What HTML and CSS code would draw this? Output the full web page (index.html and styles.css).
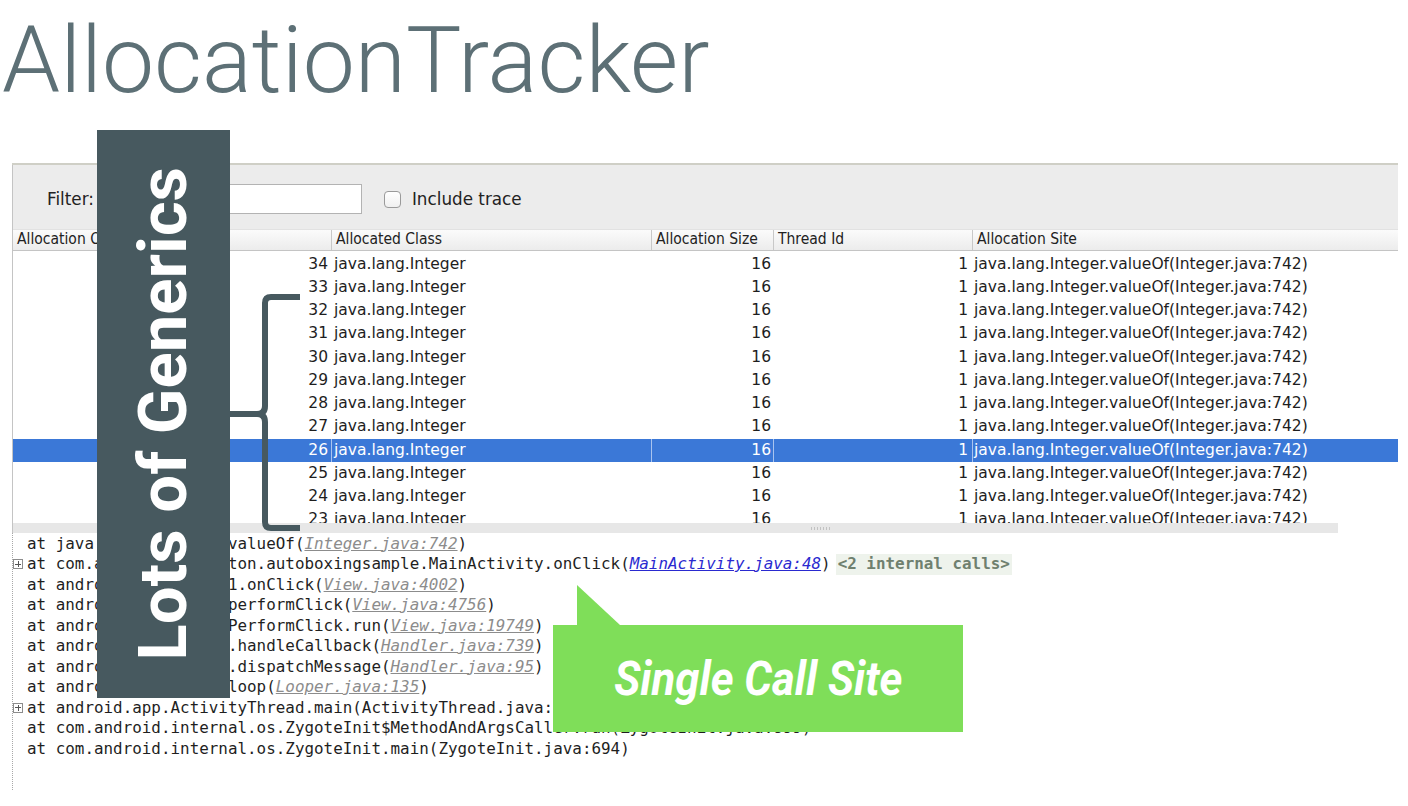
FILE: index.html
```html
<!DOCTYPE html>
<html>
<head>
<meta charset="utf-8">
<link rel="stylesheet" href="styles.css">
</head>
<body>
<div class="page">
  <h1 class="title">AllocationTracker</h1>
  <div class="panel">
    <div class="toolbar">
      <span class="lbl">Filter:</span>
      <span class="input"></span>
      <span class="check"></span>
      <span class="lbl">Include trace</span>
    </div>
    <div class="table">
      <div class="grid thead">
        <div class="th">Allocation Order</div>
        <div class="th sep">Allocated Class</div>
        <div class="th sep">Allocation Size</div>
        <div class="th sep">Thread Id</div>
        <div class="th sep">Allocation Site</div>
      </div>
      <div class="tbody">
        <div class="grid tr"><div class="c1">34</div><div class="c2">java.lang.Integer</div><div class="c3">16</div><div class="c4">1</div><div class="c5">java.lang.Integer.valueOf(Integer.java:742)</div></div>
        <div class="grid tr"><div class="c1">33</div><div class="c2">java.lang.Integer</div><div class="c3">16</div><div class="c4">1</div><div class="c5">java.lang.Integer.valueOf(Integer.java:742)</div></div>
        <div class="grid tr"><div class="c1">32</div><div class="c2">java.lang.Integer</div><div class="c3">16</div><div class="c4">1</div><div class="c5">java.lang.Integer.valueOf(Integer.java:742)</div></div>
        <div class="grid tr"><div class="c1">31</div><div class="c2">java.lang.Integer</div><div class="c3">16</div><div class="c4">1</div><div class="c5">java.lang.Integer.valueOf(Integer.java:742)</div></div>
        <div class="grid tr"><div class="c1">30</div><div class="c2">java.lang.Integer</div><div class="c3">16</div><div class="c4">1</div><div class="c5">java.lang.Integer.valueOf(Integer.java:742)</div></div>
        <div class="grid tr"><div class="c1">29</div><div class="c2">java.lang.Integer</div><div class="c3">16</div><div class="c4">1</div><div class="c5">java.lang.Integer.valueOf(Integer.java:742)</div></div>
        <div class="grid tr"><div class="c1">28</div><div class="c2">java.lang.Integer</div><div class="c3">16</div><div class="c4">1</div><div class="c5">java.lang.Integer.valueOf(Integer.java:742)</div></div>
        <div class="grid tr"><div class="c1">27</div><div class="c2">java.lang.Integer</div><div class="c3">16</div><div class="c4">1</div><div class="c5">java.lang.Integer.valueOf(Integer.java:742)</div></div>
        <div class="grid tr selected"><div class="c1">26</div><div class="c2">java.lang.Integer</div><div class="c3">16</div><div class="c4">1</div><div class="c5">java.lang.Integer.valueOf(Integer.java:742)</div></div>
        <div class="grid tr"><div class="c1">25</div><div class="c2">java.lang.Integer</div><div class="c3">16</div><div class="c4">1</div><div class="c5">java.lang.Integer.valueOf(Integer.java:742)</div></div>
        <div class="grid tr"><div class="c1">24</div><div class="c2">java.lang.Integer</div><div class="c3">16</div><div class="c4">1</div><div class="c5">java.lang.Integer.valueOf(Integer.java:742)</div></div>
        <div class="grid tr"><div class="c1">23</div><div class="c2">java.lang.Integer</div><div class="c3">16</div><div class="c4">1</div><div class="c5">java.lang.Integer.valueOf(Integer.java:742)</div></div>
      </div>
      <div class="splitter"><span class="grip"></span></div>
    </div>
    <div class="stack">
      <div class="ln"><span class="gut"></span>at java.lang.Integer.valueOf(<span class="lk">Integer.java:742</span>)</div>
      <div class="ln"><span class="gut"><span class="plus"></span></span>at com.android.ex.colton.autoboxingsample.MainActivity.onClick(<span class="lk blue">MainActivity.java:48</span>) <span class="internal">&lt;2 internal calls&gt;</span></div>
      <div class="ln"><span class="gut"></span>at android.view.View$1.onClick(<span class="lk">View.java:4002</span>)</div>
      <div class="ln"><span class="gut"></span>at android.view.View.performClick(<span class="lk">View.java:4756</span>)</div>
      <div class="ln"><span class="gut"></span>at android.view.View$PerformClick.run(<span class="lk">View.java:19749</span>)</div>
      <div class="ln"><span class="gut"></span>at android.os.Handler.handleCallback(<span class="lk">Handler.java:739</span>)</div>
      <div class="ln"><span class="gut"></span>at android.os.Handler.dispatchMessage(<span class="lk">Handler.java:95</span>)</div>
      <div class="ln"><span class="gut"></span>at android.os.Looper.loop(<span class="lk">Looper.java:135</span>)</div>
      <div class="ln"><span class="gut"><span class="plus"></span></span>at android.app.ActivityThread.main(ActivityThread.java:5221)</div>
      <div class="ln"><span class="gut"></span>at com.android.internal.os.ZygoteInit$MethodAndArgsCaller.run(ZygoteInit.java:899)</div>
      <div class="ln"><span class="gut"></span>at com.android.internal.os.ZygoteInit.main(ZygoteInit.java:694)</div>
    </div>
  </div>

  <div class="generics"><span class="gtext">Lots of Generics</span></div>
  <svg class="brace" width="80" height="245" viewBox="0 0 80 245">
    <path d="M74 7 H45 Q39 7 39 13 V116 Q39 124 31 124 H4 M31 124 Q39 124 39 132 V232 Q39 238 45 238 H74" fill="none" stroke="#47595f" stroke-width="6" stroke-linejoin="round"/>
  </svg>
  <div class="callout"><span class="ctext">Single Call Site</span></div>
</div>
</body>
</html>
```

FILE: styles.css
```css
html, body {
  margin: 0;
  padding: 0;
  background: #ffffff;
}
.page {
  position: relative;
  width: 1408px;
  height: 806px;
  overflow: hidden;
}
.title {
  margin: 15px 0 0 2px;
  font-family: Roboto, "Liberation Sans", sans-serif;
  font-weight: 300;
  font-size: 93px;
  line-height: 92px;
  color: #5d7076;
  letter-spacing: 0;
}
.panel {
  margin: 56px 0 0 12px;
  width: 1386px;
  border-top: 2px solid #cfcfc6;
}
.toolbar {
  height: 60px;
  padding-top: 4px;
  background: #ececec;
  display: flex;
  align-items: center;
  border-left: 1px solid #c4c4c4;
  font-family: "DejaVu Sans", sans-serif;
  font-size: 16.8px;
  color: #222;
}
.toolbar .lbl:first-child {
  margin-left: 34px;
}
.input {
  width: 262px;
  height: 28px;
  margin-left: 4px;
  background: #fff;
  border: 1px solid #b3b3b3;
}
.check {
  width: 15px;
  height: 15px;
  margin: 0 10px 0 22px;
  border: 1px solid #9a9a9a;
  border-radius: 4px;
  background: linear-gradient(#ffffff, #f0f0f0);
}
.toolbar .lbl:last-child {
  margin-left: 1px;
}
.table {
  border-left: 1px solid #c4c4c4;
}
.grid {
  display: grid;
  grid-template-columns: 318px 320px 122px 199px 426px;
}
.thead {
  background: linear-gradient(#fbfbfb, #ececec);
  border-top: 1px solid #e2e2e2;
  border-bottom: 1px solid #c4c4c4;
  box-sizing: border-box;
  height: 22px;
  font-family: "DejaVu Sans Condensed", "DejaVu Sans", sans-serif;
  font-stretch: condensed;
  font-size: 15.5px;
  color: #222;
}
.th {
  padding-left: 4px;
  line-height: 19px;
  white-space: nowrap;
  overflow: hidden;
}
.th.sep {
  border-left: 1px solid #c8c8c8;
}
.tbody {
  height: 272px;
  padding-top: 1.5px;
  box-sizing: border-box;
  overflow: hidden;
  background: #fff;
  font-family: "DejaVu Sans", sans-serif;
  font-size: 15.5px;
  color: #1e1e1e;
}
.tr {
  height: 23.25px;
  line-height: 23.25px;
  white-space: nowrap;
}
.tr > div {
  overflow: hidden;
}
.c1 { text-align: right; padding-right: 3px; }
.c2 { padding-left: 2px; border-left: 1px solid transparent; }
.c3 { text-align: right; padding-right: 2px; border-left: 1px solid transparent; }
.c4 { text-align: right; padding-right: 4px; border-left: 1px solid transparent; }
.c5 { padding-left: 1px; border-left: 1px solid transparent; }
.tr.selected {
  background: #3b78d7;
  color: #ffffff;
}
.tr.selected > div + div {
  border-left-color: #a9c4ef;
}
.splitter {
  width: 1325px;
  height: 10px;
  background: #e7e7e7;
  display: flex;
  align-items: center;
}
.grip {
  margin-left: 798px;
  width: 20px;
  height: 3px;
  background: repeating-linear-gradient(90deg, #c2c2c2 0 1px, transparent 1px 3px);
}
.stack {
  height: 257px;
  border-left: 1px dotted #a8a8a8;
  font-family: "DejaVu Sans Mono", "Liberation Mono", monospace;
  font-size: 15.9px;
  line-height: 20.5px;
  color: #1f1f1f;
  white-space: nowrap;
}
.ln {
  display: flex;
  align-items: center;
  height: 20.5px;
  padding-top: 1px;
  box-sizing: border-box;
}
.gut {
  width: 14px;
  height: 18px;
  flex: none;
  display: flex;
  align-items: center;
}
.plus {
  position: relative;
  width: 8px;
  height: 8px;
  border: 1px solid #8c8c8c;
  background: #fff;
  box-sizing: content-box;
}
.plus::before, .plus::after {
  content: "";
  position: absolute;
  background: #555;
}
.plus::before { left: 1px; right: 1px; top: 3.5px; height: 1px; }
.plus::after { top: 1px; bottom: 1px; left: 3.5px; width: 1px; }
.lk {
  font-style: italic;
  text-decoration: underline;
  color: #8c8c8c;
}
.lk.blue {
  color: #2a2ad0;
}
.internal {
  margin-left: 5px;
  padding: 0 2px;
  background: #eef3ec;
  color: #6f806f;
  font-weight: bold;
}
.generics {
  position: absolute;
  left: 97px;
  top: 130px;
  width: 133px;
  height: 568px;
  background: #47595f;
  display: flex;
  align-items: center;
  justify-content: center;
}
.gtext {
  writing-mode: vertical-rl;
  transform: rotate(180deg);
  font-family: Roboto, "Open Sans", sans-serif;
  font-weight: 700;
  font-size: 67px;
  line-height: 1;
  color: #ffffff;
  white-space: nowrap;
}
.brace {
  position: absolute;
  left: 226px;
  top: 290px;
}
.callout {
  position: absolute;
  left: 553px;
  top: 625px;
  width: 410px;
  height: 107px;
  background: #7fde59;
  display: flex;
  align-items: center;
  justify-content: center;
}
.callout::before {
  content: "";
  position: absolute;
  left: 24px;
  top: -40px;
  width: 0;
  height: 0;
  border-bottom: 40px solid #7fde59;
  border-right: 43px solid transparent;
}
.ctext {
  display: inline-block;
  transform: scaleX(0.91);
  font-family: Roboto, sans-serif;
  font-weight: 700;
  font-style: italic;
  font-size: 48px;
  color: #ffffff;
  white-space: nowrap;
}
```
